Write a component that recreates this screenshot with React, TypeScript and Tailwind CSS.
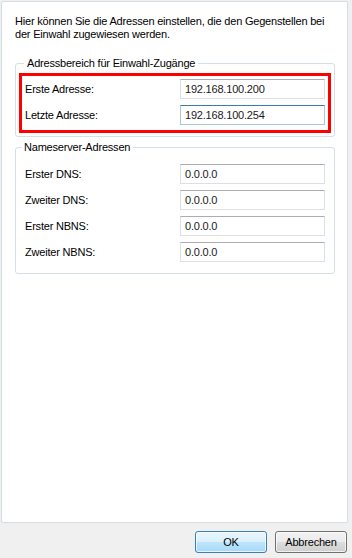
import React from 'react';

interface FieldRowProps {
  label: string;
  value: string;
  focused?: boolean;
}

const FieldRow: React.FC<FieldRowProps> = ({ label, value, focused }) => {
  return (
    <div className="flex items-center h-[20px]">
      <span className="w-[155px] shrink-0">{label}</span>
      <input
        readOnly
        value={value}
        className={
          focused
            ? 'w-[145px] h-[20px] pl-[4px] border border-[#a4c9e3] border-t-[#3d7bad] bg-white text-[#1a1a1a] outline-none'
            : 'w-[145px] h-[20px] pl-[4px] border border-[#dbdfe6] border-t-[#abadb3] bg-white text-[#1a1a1a] outline-none'
        }
      />
    </div>
  );
};

const nameservers = [
  { label: 'Erster DNS:', value: '0.0.0.0' },
  { label: 'Zweiter DNS:', value: '0.0.0.0' },
  { label: 'Erster NBNS:', value: '0.0.0.0' },
  { label: 'Zweiter NBNS:', value: '0.0.0.0' },
];

const App: React.FC = () => {
  return (
    <div
      className="w-[352px] h-[558px] bg-[#f0f0f0] flex flex-col text-[11px] leading-[13px] text-black tracking-[-0.2px]"
      style={{ fontFamily: '"Liberation Sans", Arial, sans-serif' }}
    >
      <div className="ml-px mt-px w-[347px] h-[522px] bg-white border border-[#d5dde5] rounded-[2px] pt-[13px] pl-[13px]">
        <p>
          Hier können Sie die Adressen einstellen, die den Gegenstellen bei
          <br />
          der Einwahl zugewiesen werden.
        </p>

        <fieldset className="mt-[15px] w-[320px] border border-[#d5dfe5] rounded-[3px] px-[3px] pb-[3px]">
          <legend className="ml-[5px] px-[3px] leading-[14px]">Adressbereich für Einwahl-Zugänge</legend>
          <div className="mt-[3px] border-[3px] border-[#ff0000] pt-[3px] pb-[5px] pl-[3px] flex flex-col gap-[6px]">
            <FieldRow label="Erste Adresse:" value="192.168.100.200" />
            <FieldRow label="Letzte Adresse:" value="192.168.100.254" focused />
          </div>
        </fieldset>

        <fieldset className="mt-[3px] w-[320px] border border-[#d5dfe5] rounded-[3px] pl-[9px] pt-[10px] pb-[11px]">
          <legend className="-ml-[4px] px-[3px] leading-[14px]">Nameserver-Adressen</legend>
          <div className="flex flex-col gap-[6px]">
            {nameservers.map((ns) => (
              <FieldRow key={ns.label} label={ns.label} value={ns.value} />
            ))}
          </div>
        </fieldset>
      </div>

      <div className="flex justify-end gap-[8px] pr-[5px] mt-[8px]">
        <button className="w-[72px] h-[22px] rounded-[3px] border border-[#3c7fb1] bg-[linear-gradient(to_bottom,#eaf6fd_0%,#d9f0fc_50%,#bee6fd_50%,#a7d9f5_100%)] shadow-[inset_0_0_0_1px_rgba(255,255,255,0.7)]">
          OK
        </button>
        <button className="w-[72px] h-[22px] rounded-[3px] border border-[#707070] bg-[linear-gradient(to_bottom,#f2f2f2_0%,#ebebeb_50%,#dddddd_50%,#cfcfcf_100%)] shadow-[inset_0_0_0_1px_rgba(255,255,255,0.7)]">
          Abbrechen
        </button>
      </div>
    </div>
  );
};

export default App;
